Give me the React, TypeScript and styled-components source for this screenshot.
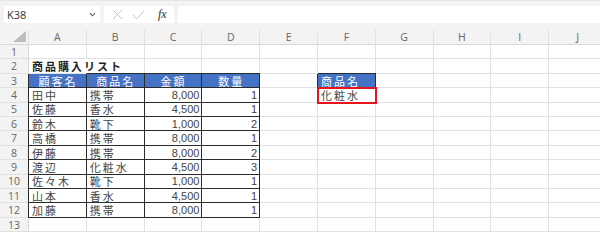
import React from 'react';
import styled, { createGlobalStyle } from 'styled-components';

// Types

type Align = 'left' | 'center' | 'right';

type CellData = {
  text: string
  align?: Align
  fill?: boolean
  boxed?: boolean
  bold?: boolean
  red?: boolean
  noRight?: boolean
}

const COLUMNS = ['A', 'B', 'C', 'D', 'E', 'F', 'G', 'H', 'I', 'J'];
const ROW_COUNT = 13;

const purchases = [
  ['田中', '携帯', '8,000', '1'],
  ['佐藤', '香水', '4,500', '1'],
  ['鈴木', '靴下', '1,000', '2'],
  ['高橋', '携帯', '8,000', '1'],
  ['伊藤', '携帯', '8,000', '2'],
  ['渡辺', '化粧水', '4,500', '3'],
  ['佐々木', '靴下', '1,000', '1'],
  ['山本', '香水', '4,500', '1'],
  ['加藤', '携帯', '8,000', '1'],
];

const buildCells = () => {
  const cells: Record<string, CellData> = {};
  cells['A2'] = { text: '商品購入リスト', bold: true, noRight: true };
  ['顧客名', '商品名', '金額', '数量'].forEach((t, i) => {
    cells[COLUMNS[i] + '3'] = { text: t, align: 'center', fill: true, boxed: true };
  });
  purchases.forEach((row, r) => {
    row.forEach((t, i) => {
      cells[COLUMNS[i] + (r + 4)] = { text: t, align: i < 2 ? 'left' : 'right', boxed: true };
    });
  });
  cells['F3'] = { text: '商品名', fill: true, boxed: true };
  cells['F4'] = { text: '化粧水', red: true };
  return cells;
};

const App: React.FC = () => {
  const cells = buildCells();

  return (
    <Wrapper>
      <GlobalStyle />
      <FormulaBar>
        <NameBox>
          <span>K38</span>
          <Chevron viewBox="0 0 8 5"><path d="M1 1 L4 4 L7 1" /></Chevron>
        </NameBox>
        <FxBox>
          <svg width="11" height="11" viewBox="0 0 11 11">
            <path d="M1 1 L10 10 M10 1 L1 10" stroke="#c4c4c4" strokeWidth="1" fill="none" />
          </svg>
          <svg width="13" height="10" viewBox="0 0 13 10">
            <path d="M1 5 L4.5 9 L12 1" stroke="#c4c4c4" strokeWidth="1" fill="none" />
          </svg>
          <FxText>fx</FxText>
        </FxBox>
        <FormulaInput />
      </FormulaBar>
      <Sheet>
        <Corner>
          <svg width="13" height="11" viewBox="0 0 13 11">
            <path d="M0 11 L13 11 L13 0 Z" fill="#bdbdbd" />
          </svg>
        </Corner>
        {COLUMNS.map((c) => (
          <ColHeader key={c}>{c}</ColHeader>
        ))}
        {Array.from({ length: ROW_COUNT }, (_, i) => i + 1).map((r) => (
          <React.Fragment key={r}>
            <RowHeader>{r}</RowHeader>
            {COLUMNS.map((c, ci) => {
              const d = cells[c + r];
              const prevCol = ci > 0 ? cells[COLUMNS[ci - 1] + r] : undefined;
              const above = cells[c + (r - 1)];
              return (
                <Cell
                  key={c}
                  $align={d?.align ?? 'left'}
                  $fill={!!d?.fill}
                  $boxed={!!d?.boxed}
                  $edgeLeft={!!d?.boxed && !prevCol?.boxed}
                  $edgeTop={!!d?.boxed && !above?.boxed}
                  $bold={!!d?.bold}
                  $red={!!d?.red}
                  $noRight={!!d?.noRight}
                >
                  {d?.text}
                </Cell>
              );
            })}
          </React.Fragment>
        ))}
      </Sheet>
    </Wrapper>
  );
}

const GlobalStyle = createGlobalStyle`
  body {
    margin: 0;
    background: #ffffff;
    font-family: "Noto Sans", "Noto Sans CJK JP", sans-serif;
  }
`

const Wrapper = styled.div`
  width: 600px;
  height: 236px;
  overflow: hidden;
  background: #ffffff;
`

const FormulaBar = styled.div`
  display: flex;
  gap: 4px;
  height: 30px;
  box-sizing: border-box;
  padding: 5px 0 7px 4px;
  background: #f3f3f3;
  border-top: 1px solid #e6e6e6;
`

const NameBox = styled.div`
  width: 96px;
  background: #ffffff;
  display: flex;
  align-items: center;
  justify-content: space-between;
  padding: 0 4px 0 3px;
  box-sizing: border-box;
  font-family: "Open Sans", "Noto Sans", sans-serif;
  font-size: 11px;
  color: #333333;
`

const Chevron = styled.svg`
  width: 7px;
  height: 5px;
  fill: none;
  stroke: #555555;
  stroke-width: 1.2;
`

const FxBox = styled.div`
  width: 70px;
  background: #ffffff;
  display: flex;
  align-items: center;
  gap: 9px;
  padding-left: 8px;
  box-sizing: border-box;
`

const FxText = styled.span`
  font-family: "Liberation Serif", serif;
  font-style: italic;
  font-size: 12px;
  color: #333333;
  margin-left: 4px;
`

const FormulaInput = styled.div`
  flex: 1;
  background: #ffffff;
`

const Sheet = styled.div`
  display: grid;
  grid-template-columns: 29px repeat(10, 57.8px);
  grid-template-rows: 15px repeat(13, 14.42px);
  background: #ffffff;
`

const Corner = styled.div`
  background: #f3f3f3;
  border-right: 1px solid #e1e1e1;
  border-bottom: 1px solid #d8d8d8;
  display: flex;
  align-items: flex-end;
  justify-content: flex-end;
  padding: 0 2px 2px 0;
  box-sizing: border-box;
`

const ColHeader = styled.div`
  background: #f3f3f3;
  border-right: 1px solid #e1e1e1;
  border-bottom: 1px solid #d8d8d8;
  box-sizing: border-box;
  display: flex;
  align-items: center;
  justify-content: center;
  font-family: "Open Sans", "Noto Sans", sans-serif;
  font-size: 10.5px;
  color: #666666;
`

const RowHeader = styled.div`
  background: #f3f3f3;
  border-right: 1px solid #d8d8d8;
  border-bottom: 1px solid #e1e1e1;
  box-sizing: border-box;
  display: flex;
  align-items: center;
  justify-content: center;
  font-family: "Open Sans", "Noto Sans", sans-serif;
  font-size: 10.5px;
  color: #666666;
`

const Cell = styled.div<{
  $align: Align
  $fill: boolean
  $boxed: boolean
  $edgeLeft: boolean
  $edgeTop: boolean
  $bold: boolean
  $red: boolean
  $noRight: boolean
}>`
  position: relative;
  box-sizing: border-box;
  display: flex;
  align-items: center;
  justify-content: ${({ $align }) => ($align === 'center' ? 'center' : $align === 'right' ? 'flex-end' : 'flex-start')};
  padding: 0 2px 0 3px;
  white-space: nowrap;
  overflow: visible;
  font-family: "Liberation Sans", "Noto Sans CJK JP", sans-serif;
  font-size: 11px;
  letter-spacing: ${({ $align }) => ($align === 'right' ? '0' : '2px')};
  font-weight: ${({ $bold }) => ($bold ? 700 : 400)};
  color: ${({ $fill, $bold }) => ($fill ? '#ffffff' : $bold ? '#222222' : '#444444')};
  background: ${({ $fill }) => ($fill ? '#4472c4' : 'transparent')};
  border-right: 1px solid ${({ $boxed, $noRight }) => ($boxed ? '#2b2b2b' : $noRight ? 'transparent' : '#e1e1e1')};
  border-bottom: 1px solid ${({ $boxed }) => ($boxed ? '#2b2b2b' : '#e1e1e1')};
  box-shadow: ${({ $edgeLeft, $edgeTop }) =>
    [$edgeLeft ? '-1px 0 0 #2b2b2b' : '', $edgeTop ? '0 -1px 0 #2b2b2b' : '']
      .filter(Boolean)
      .join(', ') || 'none'};
  outline: ${({ $red }) => ($red ? '2px solid #e8141c' : 'none')};
  outline-offset: -1px;
  z-index: ${({ $red, $bold }) => ($red || $bold ? 1 : 'auto')};
`

export default App;
